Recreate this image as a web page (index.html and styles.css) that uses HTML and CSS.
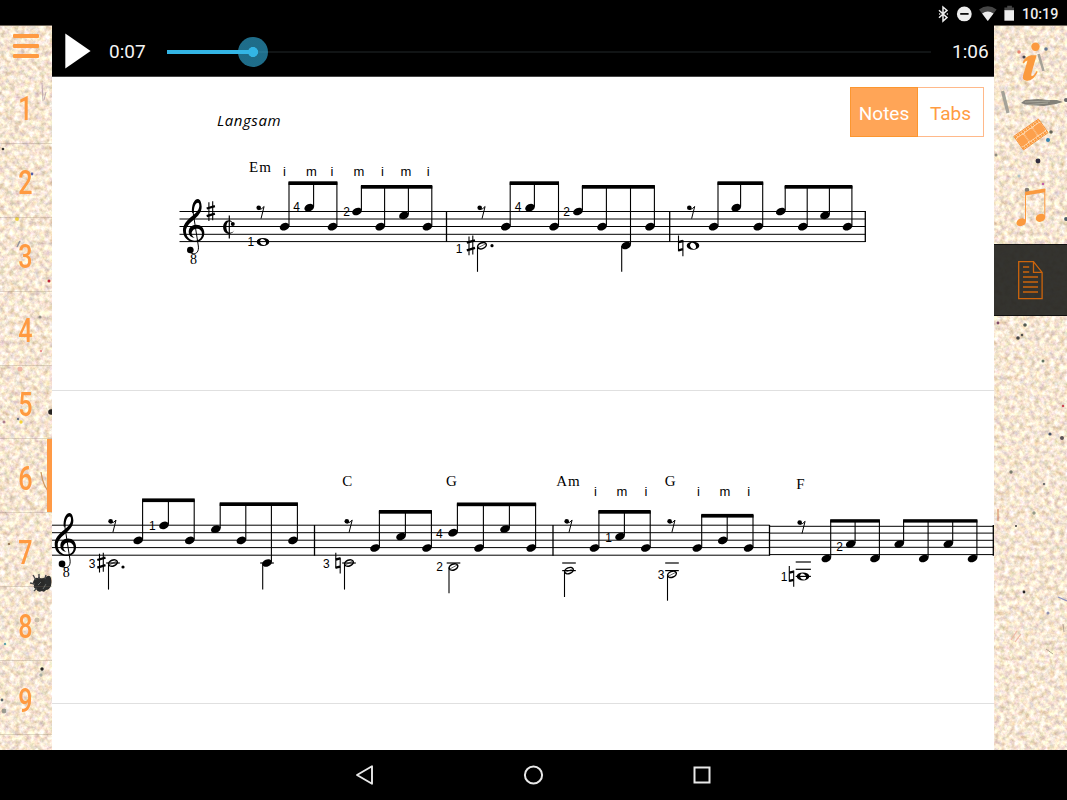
FILE: index.html
```html
<!DOCTYPE html>
<html lang="en">
<head>
<meta charset="utf-8">
<title>Sheet music player</title>
<link rel="stylesheet" href="styles.css">
</head>
<body>
<div class="screen">
  <header class="status">
    <svg class="status-icons" width="76" height="20" viewBox="938 3 76 20">
      <path d="M939 9.2l8 7.4-4 3.5V6l4 3.4-8 7.3" fill="none" stroke="#ededed" stroke-width="1.5"/>
      <path d="M939.6 12.9h.1M947.3 12.9h.1" stroke="#ededed" stroke-width="1.5" stroke-linecap="round"/>
      <circle cx="964.3" cy="12.9" r="7.4" fill="#ededed"/>
      <path d="M960.2 12.9h8.4" stroke="#000" stroke-width="1.7"/>
      <path d="M987.8 20L979 8.4Q987.8 2 996.600 8.400Z" fill="#454545"/>
      <path d="M987.8 20l-5.700-7.400q5.700-4 11.400 0Z" fill="#ededed"/>
      <path d="M1004.400 6.400h2.800V4.700h4.700v1.700h2.700V10h-10.200z" fill="#454545"/>
      <path d="M1004.400 9.200h10.200v10.500h-10.200z" fill="#ededed"/>
    </svg>
    <span class="clock">10:19</span>
  </header>

  <div class="main">
    <nav class="lessons">
      <svg class="paper" width="52" height="725" viewBox="0 25 52 725">
        <defs>
          <filter id="grain" x="0" y="0" width="100%" height="100%" color-interpolation-filters="sRGB">
            <feTurbulence type="fractalNoise" baseFrequency="0.2" numOctaves="4" seed="21"/>
            <feColorMatrix values=".42 0 0 0 .755  .42 .16 0 0 .61  .40 .14 .26 0 .425  0 0 0 0 1"/>
          </filter>
        </defs>
        <rect y="25" width="52" height="725" filter="url(#grain)"/>
        <g class="fleck">
          <circle cx="3" cy="148" r="1.300" fill="#222"/><circle cx="32" cy="173" r="1.400" fill="#4452a0"/>
          <circle cx="17" cy="218" r="2" fill="#ecd23a"/><circle cx="49" cy="280" r="1.500" fill="#b8102c"/>
          <circle cx="51" cy="411" r="2.800" fill="#111"/><circle cx="21" cy="421" r="1.700" fill="#f4d128"/>
          <circle cx="18" cy="418" r="1.200" fill="#5b6475"/><circle cx="4" cy="421" r="1.500" fill="#a67282"/>
          <circle cx="42" cy="668" r="1.700" fill="#111"/><circle cx="2" cy="699" r="1.400" fill="#47545c"/>
          <circle cx="4" cy="710" r="2.400" fill="#93948a"/><circle cx="41" cy="674" r="1.700" fill="#a3aaa2"/>
          <circle cx="20" cy="368" r="2.500" fill="#eeb0a0"/><circle cx="5" cy="643" r="1.200" fill="#4c9aa4"/>
          <circle cx="40" cy="316" r="1.600" fill="#8a877b"/><circle cx="41" cy="350" r="1.200" fill="#e98b86"/>
          <circle cx="9" cy="543" r="1" fill="#753"/><circle cx="37" cy="619" r="2.500" fill="#c4b8a4"/>
          <path d="M42 82l1 18M46 91l-2 8" stroke="#b9a3ad" fill="none"/>
          <path d="M41 471q2 16 11 23" stroke="#c99255" stroke-width="1.300" fill="none"/>
          <path d="M17 246l3-6" stroke="#8b8d99" stroke-width="1.600"/>
          <path d="M34 579q1-3 4-2 1-3 2 0 3 1 6-1 4-3 5 1 1 4 0 8-2 4-5 4-2 3-4 1-4 2-6-2-3-1-2-4-2-2 0-5z" fill="#16191b"/>
          <path d="M30 582l5 1M33 574l3 5M39 573v5M46 574l-1 4M34 590l3-3" stroke="#33383a" stroke-width="1.400"/>
          <path d="M38 584l3-3M43 588l3-5" stroke="#6a7270" stroke-width=".8"/>
        </g>
      </svg>
      <button class="menu" aria-label="Menu"><i></i><i></i><i></i></button>
      <a class="lesson"><span>1</span></a>
      <a class="lesson"><span>2</span></a>
      <a class="lesson"><span>3</span></a>
      <a class="lesson"><span>4</span></a>
      <a class="lesson"><span>5</span></a>
      <a class="lesson current"><span>6</span></a>
      <a class="lesson"><span>7</span></a>
      <a class="lesson"><span>8</span></a>
      <a class="lesson"><span>9</span></a>
    </nav>

    <main class="content">
      <div class="player">
        <svg class="play" width="26" height="36" viewBox="0 0 26 36"><path d="M.3.500L25.600 18 .3 35.500z" fill="#fff"/></svg>
        <span class="time">0:07</span>
        <div class="track"><div class="played"></div><div class="thumb"></div></div>
        <span class="time total">1:06</span>
      </div>
      <section class="row row-first">
        <div class="switch"><span class="on">Notes</span><span class="off">Tabs</span></div>
        <svg class="score" id="system1" width="942" height="313" viewBox="52 77 942 313"></svg>
      </section>
      <section class="row row-second">
        <svg class="score" id="system2" width="942" height="312" viewBox="52 391 942 312"></svg>
      </section>
      <section class="row-rest"></section>
    </main>

    <aside class="tools">
      <svg class="paper" width="73" height="725" viewBox="994 25 73 725">
        <rect x="994" y="25" width="73" height="725" filter="url(#grain)"/>
        <g class="fleck">
          <path d="M1038.500 53l5 17" stroke="#9d9b91" stroke-width="2.600"/>
          <path d="M1002.500 90l5.500 22" stroke="#9c9b92" stroke-width="3.400"/>
          <path d="M1021 102l4-3 13-1 10 1 9 0 6 2-7 2-12 2-17-1z" fill="#77766f"/>
          <path d="M1025 101l25-1M1024 104l24-2" stroke="#aaa99d" stroke-width=".8"/>
          <circle cx="1019" cy="51" r="1.800" fill="#e87b66"/><circle cx="1024" cy="56" r="1.600" fill="#353540"/>
          <circle cx="1046" cy="48" r="1.800" fill="#546b8d"/><circle cx="1048" cy="139" r="2" fill="#237cab"/>
          <circle cx="1038" cy="160" r="2.400" fill="#1d1b32"/><circle cx="1051" cy="131" r="1.800" fill="#55584e"/>
          <circle cx="1043" cy="183" r="1.300" fill="#c054a4"/><circle cx="1066" cy="218" r="1.900" fill="#384a58"/>
          <circle cx="1066" cy="99" r="2" fill="#55575c"/><circle cx="1027" cy="189" r="2.300" fill="#77716b"/>
          <circle cx="1019" cy="175" r="1.500" fill="#a8bfc8"/><circle cx="996" cy="154" r="1.500" fill="#89857b"/>
          <circle cx="1025" cy="324" r="1.800" fill="#424a43"/><circle cx="998" cy="322" r="1.400" fill="#71385c"/>
          <circle cx="1018" cy="337" r="1.800" fill="#333"/><circle cx="1022" cy="334" r="1.300" fill="#444"/>
          <circle cx="1043" cy="360" r="1.500" fill="#565"/><circle cx="1050" cy="433" r="1.600" fill="#38465e"/>
          <circle cx="1062" cy="437" r="2" fill="#4c454b"/><circle cx="1063" cy="405" r="1.200" fill="#c34"/>
          <circle cx="1011" cy="471" r="1.700" fill="#6d7262"/><circle cx="1044" cy="483" r="1.300" fill="#666"/>
          <circle cx="1034" cy="512" r="1.700" fill="#8b917d"/><circle cx="1024" cy="591" r="1.400" fill="#111"/>
          <circle cx="1016" cy="525" r="1" fill="#222"/><circle cx="1048" cy="612" r="1.500" fill="#88a"/>
          <path d="M998 508v12" stroke="#d2764f" fill="none"/>
          <path d="M1058 596l9 4" stroke="#8288bc" stroke-width="1.200"/>
          <path d="M1011 639l6-9M1015 641l6-8" stroke="#efb5a0" stroke-width="1.200"/>
          <path d="M1046 648l7 5M1063 623l1 8" stroke="#a99b87"/>
        </g>
      </svg>
      <a class="tool" aria-label="Info">
        <svg width="73" height="73" viewBox="994 25 73 73" fill="#fb9a3e">
          <circle cx="1035.500" cy="46.700" r="4.200"/>
          <path d="M1022.600 62.500q2.400-6 8.400-7.300h5.600l-5.300 18.500q-.5 2.500 1 2.200 2-.5 4.200-4.900l1.200.8q-3.600 8.400-10.300 8.900-5.600.2-4.400-4.900l4.500-15.200q-1.800.1-3.700 2.800z"/>
        </svg>
      </a>
      <a class="tool" aria-label="Video">
        <svg width="73" height="73" viewBox="994 98 73 73">
          <g transform="translate(1031 134.500) rotate(-35)">
            <path d="M-15-8.300h30V8.300h-30z" fill="#ffe6c8" stroke="#f58f35" stroke-width=".9"/>
            <rect x="-14.700" y="-5" width="8.600" height="10" rx="1.500" fill="#fda04c"/>
            <rect x="-5" y="-5" width="9.400" height="10" rx="1.500" fill="#fda04c"/>
            <rect x="5.500" y="-5" width="8.900" height="10" rx="1.500" fill="#fda04c"/>
            <path d="M-15-6.700h30M-15 6.700h30" stroke="#fb9a3e" stroke-width="2.200" stroke-dasharray="2.400 .5"/>
            <path d="M-5.500-5V5M5-5V5" stroke="#f79a45" stroke-width=".7"/>
          </g>
        </svg>
      </a>
      <a class="tool" aria-label="Music">
        <svg width="73" height="73" viewBox="994 171 73 73" fill="#fb9a3e">
          <ellipse cx="1021.200" cy="222.200" rx="4.900" ry="3.700" transform="rotate(-24 1021.200 222.200)"/>
          <ellipse cx="1040.500" cy="217.800" rx="4.900" ry="3.900" transform="rotate(-24 1040.500 217.800)"/>
          <path d="M1025.200 191.800l20-3.300v3.800l-20 3.300z"/>
          <path d="M1025.500 192v29M1044.800 189v28" stroke="#fb9a3e" stroke-width="1"/>
        </svg>
      </a>
      <a class="tool selected" aria-label="Sheet">
        <svg width="73" height="72" viewBox="994 244 73 72" fill="none" stroke="#cc640c">
          <path d="M1018.700 261.700h14.800l8.600 10.700v26.300h-23.400zM1033.500 262v10.400h8.400" stroke-width="1.300"/>
          <path d="M1023 267h6.200M1023 272h6.200M1023 277h15M1023 282h15M1023 287h15M1023 292h15" stroke-width="1.500"/>
        </svg>
      </a>
    </aside>
  </div>

  <footer class="navbar">
    <svg width="18" height="22" viewBox="355 764 18 22"><path d="M357 775l15-8.800v17.600z" fill="none" stroke="#e8e8e8" stroke-width="1.900" stroke-linejoin="round"/></svg>
    <svg width="22" height="22" viewBox="0 0 22 22"><circle cx="11.500" cy="11" r="8.600" fill="none" stroke="#e8e8e8" stroke-width="2"/></svg>
    <svg width="18" height="18" viewBox="0 0 18 18"><rect x="1.500" y="1.500" width="15" height="15" fill="none" stroke="#e8e8e8" stroke-width="2"/></svg>
  </footer>
</div>
<script src="score.js"></script>
</body>
</html>
```

FILE: styles.css
```css
* { box-sizing: border-box; }
body { margin: 0; background: #000; font-family: Roboto, "Liberation Sans", sans-serif; }
.screen { width: 1067px; height: 800px; display: flex; flex-direction: column; overflow: hidden; background: #000; }

.status { height: 25px; flex: none; display: flex; justify-content: flex-end; align-items: center; gap: 8px; padding: 2px 8px 0 0; }
.status-icons { display: block; }
.clock { width: 37px; color: #ededed; font-size: 14.3px; font-weight: 500; line-height: 20px; white-space: nowrap; }

.main { flex: 1; min-height: 0; display: flex; }
.paper { position: absolute; left: 0; top: 0; z-index: 0; }
.fleck { opacity: .9; }

.lessons { position: relative; width: 52px; flex: none; display: flex; flex-direction: column; overflow: hidden; background: #f8e6cf; border-top: 1px solid #6e665c; }
.menu { position: relative; height: 44px; flex: none; display: flex; flex-direction: column; gap: 6px; padding: 8px 13px 0; border: 0; background: none; }
.menu i { height: 4px; width: 26px; border-radius: 1px; background: #ff9a40; }
.lesson { position: relative; height: 73.9px; flex: none; display: flex; align-items: center; justify-content: center; padding: 6px 1px 0 0; border-bottom: 1px solid rgba(130, 115, 95, .25); color: #ff9a40; }
.lesson span { font-size: 33px; line-height: 36px; font-weight: 500; transform: scaleX(.76); }
.lesson.current::after { content: ""; position: absolute; right: 0; top: 0; width: 5px; height: 73px; background: #ff9a45; }

.content { width: 942px; flex: none; display: flex; flex-direction: column; background: #fff; }
.player { height: 52px; flex: none; display: flex; align-items: center; padding: 0 0 0 13px; background: #000; border-bottom: 1px solid #444; color: #f4f4f4; }
.play { flex: none; }
.time { flex: none; width: 76px; padding: 3px 0 0 18px; font-size: 19px; line-height: 24px; white-space: nowrap; }
.time.total { width: 63px; padding-left: 21px; }
.track { position: relative; flex: none; width: 764px; height: 2px; top: 1px; background: #111415; }
.played { position: absolute; left: 0; top: -1px; width: 86px; height: 4px; background: #33b5e5; }
.thumb { position: absolute; left: 71px; top: -14px; width: 30px; height: 30px; border-radius: 50%; background: radial-gradient(circle, #33b5e5 0 4.7px, rgba(51, 181, 229, .6) 5.3px); }

.row { position: relative; flex: none; border-bottom: 1px solid #e0e0e0; }
.row-first { height: 314px; }
.row-second { height: 313px; }
.row-rest { flex: 1; }
.score { display: block; }
.switch { position: absolute; right: 10px; top: 10px; width: 134px; height: 50px; display: flex; font-size: 19px; text-align: center; }
.on { width: 68px; background: #ffa557; color: #fff; border: 1px solid #fc962f; }
.off { width: 66px; color: #ff9c42; border: 1px solid #ffb98a; border-left: 0; }
.on, .off { display: flex; align-items: center; justify-content: center; padding-top: 2px; }

.ink { fill: #000; }
.line { fill: none; stroke: #000; }
.finger { font: 12px "Liberation Sans", sans-serif; text-anchor: middle; }
.hand { font: 13px "Liberation Sans", sans-serif; text-anchor: middle; }
.chord { font: 15px "Liberation Serif", serif; letter-spacing: 1px; text-anchor: middle; }
.octave { font: 14px "Liberation Serif", serif; text-anchor: middle; }
.tempo { font: italic 15px "Open Sans", "Noto Sans", sans-serif; }

.tools { position: relative; width: 73px; flex: none; overflow: hidden; background: #f8e6cf; border-top: 1px solid #6e665c; }
.tool { position: relative; display: block; height: 73px; }
.tool:first-of-type { margin-top: -1px; }
.tool svg { display: block; }
.tool.selected { height: 72px; background: rgba(37, 37, 33, .93); border-top: 1px solid #111; border-bottom: 1px solid #111; }
.tool.selected svg { margin-top: -1px; }

.navbar { height: 50px; flex: none; display: flex; align-items: center; justify-content: center; gap: 149px; padding-right: 2px; }
```

FILE: score.js
```js
const NS = "http://www.w3.org/2000/svg";

// Draws one system of notation into the given svg element.
function Score(id) {
  const svg = document.getElementById(id);
  const add = (tag, attrs, text) => {
    const el = document.createElementNS(NS, tag);
    for (const k in attrs) el.setAttribute(k, attrs[k]);
    if (text) el.textContent = text;
    svg.appendChild(el);
    return el;
  };
  const line = (x1, y1, x2, y2, w) => add("line", { x1, y1, x2, y2, class: "line", "stroke-width": w || 1.1 });
  const path = (d, t, w) => add("path", w
    ? { d, transform: t, class: "line", "stroke-width": w }
    : { d, transform: t, class: "ink" });
  const api = {
    line,
    text: (cls, x, y, s) => add("text", { x, y, class: cls }, s),
    staff: (x1, x2, ys) => ys.forEach(y => line(x1, y, x2, y, 1)),
    bar: (x, y1, y2) => line(x, y1, x, y2, 1.3),
    // heads: [x, y] pairs joined under a single beam
    group(beamY, heads, thick = 3.7) {
      heads.forEach(([x, y]) => {
        add("ellipse", { cx: x, cy: y, rx: 5, ry: 3.6, transform: `rotate(-22 ${x} ${y})`, class: "ink" });
        line(x + 4.4, y - 1, x + 4.4, beamY + 1);
      });
      const a = heads[0][0] + 3.9, b = heads[heads.length - 1][0] + 4.9;
      add("rect", { x: a, y: beamY, width: b - a, height: thick, class: "ink" });
    },
    rest(x, y) {
      add("circle", { cx: x, cy: y, r: 2.3, class: "ink" });
      path("M0 1.900Q3.500 1.500 5.400-1.200L2.300 11", `translate(${x} ${y})`, 1);
    },
    half(x, y, bottom) {
      add("ellipse", { cx: x, cy: y, rx: 4.5, ry: 2.9, transform: `rotate(-22 ${x} ${y})`, class: "line", "stroke-width": 1.5 });
      line(x - 3.400, y + 1.800, x + 3.400, y - 1.800, .6);
      line(x - 4.5, y + .5, x - 4.5, bottom);
    },
    whole(x, y) {
      path("M-6.300 0a6.300 4 0 1 0 12.600 0a6.300 4 0 1 0-12.600 0M-2.600-1.700C-1.300-4 1.600-2.800 2.700-.3S2.300 3.800.3 3.200-3.800.4-2.600-1.700", `translate(${x} ${y})`)
        .setAttribute("fill-rule", "evenodd");
    },
    ledger: (x, y, r = 6.8) => line(x - r, y, x + r, y, 1.2),
    dot: (x, y) => add("circle", { cx: x, cy: y, r: 1.6, class: "ink" }),
    sharp(x, y) {
      const t = `translate(${x} ${y})`;
      path("M-1.800-9V9.800M2-10V9", t, 1.100);
      path("M-4-2.800L4.200-5.200M-4 4.800L4.200 2.400", t, 2.300);
    },
    natural(x, y) {
      const t = `translate(${x} ${y})`;
      path("M-2.200-10V5.800M2.200-5.400V10.800", t, 1.100);
      path("M-2.200-3.300L2.200-4.400M-2.200 4.900L2.200 3.800", t, 2.400);
    },
    clef(dx, dy) {
      const t = `translate(${170 + dx} ${100 + dy}) scale(.3333)`;
      path("M66 338C64 316 72 297 84 297C90 297 95 308 95 320C95 355 48 364 48 394C48 411 60 422 75 422C87 422 96 413 96 402C96 392 89 386 80 386C71 386 65 393 65 400C65 406 68 410 74 414C62 412 56 406 56 396C56 383 65 374 79 374C93 374 103 384 103 399C103 416 91 426 74 426C54 426 39 413 39 391C39 355 87 345 88 318C88 312 87 308 84 308C76 308 71 322 72 338Z", t);
      path("M69 335L85 438C87 454 80 462 70 461Q62 460 58 455", t, 3);
      path("M51 450a10 10 0 1 0 20 0a10 10 0 1 0-20 0", t);
    },
    cut(x, y) {
      path("M4-2.500Q3.500-6.300 0-6.600C-7.800-6.600-7.800 7 0 7Q4 6.700 5.600 2.600Q4 5.800.8 5.900C-3.800 5.800-3.600-5.500.6-5.600L3-4.500z", `translate(${x} ${y})`);
      add("circle", { cx: x + 3.8, cy: y - 2.900, r: 2, class: "ink" });
      line(x + .3, y - 11.500, x + .3, y + 11.500, 1.200);
    }
  };
  return api;
}

// First system
const a = Score("system1");
a.staff(179.5, 865.5, [211.5, 219, 226.5, 234.300, 241.600]);
[446.5, 669.7, 865.3].forEach(x => a.bar(x, 211, 242));
a.clef(0, 0);
a.sharp(210.7, 211.3);
a.cut(229, 226.900);
a.text("octave", 193.4, 263.5, "8");
a.text("tempo", 217, 126, "Langsam").setAttribute("textLength", 63.5);
a.text("chord", 260.5, 172.3, "Em");
[[284.5, "i"], [311.5, "m"], [332, "i"], [359, "m"], [382.5, "i"], [406, "m"], [428.3, "i"]]
  .forEach(([x, s]) => a.text("hand", x, 175.7, s));
a.rest(258.7, 207.700);
a.rest(479.7, 207.700);
a.rest(689.3, 207.700);
a.group(181.300, [[284.6, 226.7], [309.2, 207.7], [332.5, 226.7]]);
a.group(185, [[357, 211.5], [380.2, 226.7], [404, 215.4], [427.4, 226.7]]);
a.group(181.300, [[505.8, 226.7], [530, 207.7], [554.1, 226.7]]);
a.group(185, [[578, 211.5], [602, 226.7], [626.1, 245.5], [650, 226.7]]);
a.group(181.300, [[713.6, 226.7], [736.2, 207.7], [758.3, 226.7]]);
a.group(185, [[780.8, 211.5], [802.8, 226.7], [825, 215.4], [847.5, 226.7]]);
a.line(621.7, 246, 621.7, 271.8);
a.whole(263, 241.9);
a.whole(693, 245.7);
a.half(482, 245.7, 271.8);
a.sharp(470.8, 245.5);
a.dot(492, 245.7);
a.natural(680.7, 245.4);
[[296.600, 211, "4"], [346.5, 216.300, "2"], [250.800, 246, "1"], [518, 211.300, "4"], [566.700, 216.300, "2"], [459, 252.500, "1"]]
  .forEach(([x, y, s]) => a.text("finger", x, y, s));

// Second system
const b = Score("system2");
b.staff(52, 769.7, [525.200, 532.700, 540.200, 547.600, 555.200]);
b.staff(769.7, 994, [526.300, 533.100, 540.300, 547.300, 554.600]);
[314.5, 553, 769.5, 993.300].forEach(x => b.bar(x, 525, 555.7));
b.clef(-128.3, 313.900);
b.text("octave", 66.2, 577, "8");
[[347.800, 486, "C"], [452, 486, "G"], [568.500, 486, "Am"], [670.700, 486, "G"], [801, 489.400, "F"]]
  .forEach(([x, y, s]) => b.text("chord", x, y, s));
[[595.5, "i"], [622, "m"], [646, "i"], [698.5, "i"], [725, "m"], [748.7, "i"]]
  .forEach(([x, s]) => b.text("hand", x, 496.300, s));
[[110.6, 521.3], [346.8, 521.3], [566.7, 521.3], [669.6, 521.3], [799.7, 522.5]]
  .forEach(([x, y]) => b.rest(x, y));
b.group(498.400, [[138.2, 540.4], [164, 525.4], [189.8, 540.4]]);
b.group(502.300, [[215.800, 529.2], [241.4, 540.4], [267, 563], [293, 540.4]]);
b.group(510, [[375, 548], [401, 536.5], [427, 548]]);
b.group(502.500, [[453, 532.7], [479, 548], [505, 529], [531.2, 548]]);
b.group(510, [[594.5, 548], [620, 536.5], [645.8, 548]]);
b.group(513.900, [[697.3, 548], [722.8, 540.4], [748.6, 548]]);
b.group(519.200, [[826.3, 558.5], [850.7, 544], [875, 558.5]], 3.400);
b.group(519.200, [[899.2, 544], [923.7, 558.5], [948.3, 544], [972.5, 558.5]], 3.400);
b.line(262.7, 563.5, 262.7, 589.6);
b.half(113, 563, 589.6);
b.half(349, 563, 589.600);
b.half(453.5, 567, 593.300);
b.half(569, 570.6, 597);
b.half(672, 574.3, 600.700);
[[113, 563], [267, 563], [349, 563], [453.5, 563], [569, 563], [569, 570.6], [672, 563], [672, 570.6]]
  .forEach(([x, y]) => b.ledger(x, y));
[562, 569.300, 576.400].forEach(y => b.ledger(803.300, y, 7.600));
b.whole(803, 576.400);
b.sharp(101.3, 562.8);
b.dot(123, 567);
b.natural(338, 562.8);
b.natural(791.5, 576);
[[92, 567.700, "3"], [152.300, 530, "1"], [326.300, 567.700, "3"], [439.500, 571, "2"], [439.300, 537.700, "4"],
 [608.700, 542.300, "1"], [661, 578.500, "3"], [839.500, 550.500, "2"], [784, 581.300, "1"]]
  .forEach(([x, y, s]) => b.text("finger", x, y, s));
```
